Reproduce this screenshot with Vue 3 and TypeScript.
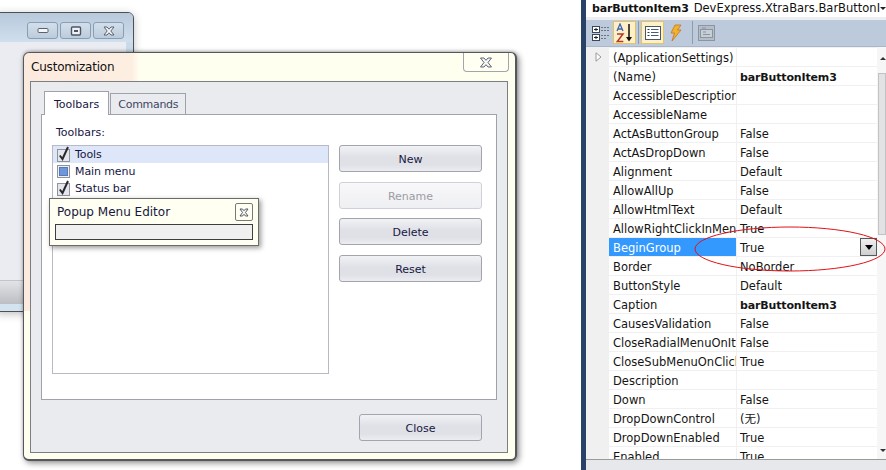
<script setup lang="ts">
interface Row { name: string; value: string; bold?: boolean; selected?: boolean }
const rows: Row[] = [
  { name: '(ApplicationSettings)', value: '' },
  { name: '(Name)', value: 'barButtonItem3', bold: true },
  { name: 'AccessibleDescription', value: '' },
  { name: 'AccessibleName', value: '' },
  { name: 'ActAsButtonGroup', value: 'False' },
  { name: 'ActAsDropDown', value: 'False' },
  { name: 'Alignment', value: 'Default' },
  { name: 'AllowAllUp', value: 'False' },
  { name: 'AllowHtmlText', value: 'Default' },
  { name: 'AllowRightClickInMenu', value: 'True' },
  { name: 'BeginGroup', value: 'True', selected: true },
  { name: 'Border', value: 'NoBorder' },
  { name: 'ButtonStyle', value: 'Default' },
  { name: 'Caption', value: 'barButtonItem3', bold: true },
  { name: 'CausesValidation', value: 'False' },
  { name: 'CloseRadialMenuOnItemClick', value: 'False' },
  { name: 'CloseSubMenuOnClick', value: 'True' },
  { name: 'Description', value: '' },
  { name: 'Down', value: 'False' },
  { name: 'DropDownControl', value: '(无)' },
  { name: 'DropDownEnabled', value: 'True' },
  { name: 'Enabled', value: 'True' },
]
const actions = [
  { label: 'New', disabled: false },
  { label: 'Rename', disabled: true },
  { label: 'Delete', disabled: false },
  { label: 'Reset', disabled: false },
]
</script>

<template>
  <div class="screen">
    <div class="desktop">
      <div class="backwin">
        <div class="back-title">
          <div class="wbtn">
            <svg width="12" height="7" viewBox="0 0 12 7"><rect x="1" y="1.500" width="10" height="4" rx="1" fill="#f4f6f9" stroke="#59626f" /></svg>
          </div>
          <div class="wbtn">
            <svg width="12" height="10" viewBox="0 0 12 10"><rect x="1.500" y="1" width="9" height="8" rx="1" fill="#eef1f5" stroke="#4d5764" stroke-width="1.400" /><rect x="4" y="4" width="4" height="2" fill="#4d5764" /></svg>
          </div>
          <div class="wbtn">
            <svg width="14" height="10" viewBox="0 0 14 10"><path d="M2 1h3l2 2.200L9 1h3L8.800 5 12 9H9L7 6.800 5 9H2l3.200-4z" fill="#f2f4f7" stroke="#5a6370" /></svg>
          </div>
        </div>
        <div class="back-body">
          <div class="back-content"></div>
          <div class="back-band"></div>
        </div>
        <div class="back-foot"></div>
      </div>

      <div class="dialog">
        <div class="dlg-title">
          <span>Customization</span>
          <div class="dlg-close">
            <svg width="14" height="11" viewBox="0 0 14 11"><path d="M1.500 1h3.500l2 2.300L9 1h3.500L9 5.500l3.500 4.500H9L7 7.700 5 10H1.500L5 5.500z" fill="#f6f7f9" stroke="#5c6470" /></svg>
          </div>
        </div>
        <div class="dlg-body">
          <div class="tabs">
            <div class="tab active">Toolbars</div>
            <div class="tab">Commands</div>
          </div>
          <div class="page">
            <div class="lbl">Toolbars:</div>
            <div class="page-main">
              <div class="list">
                <div class="item sel">
                  <svg class="chk" width="15" height="17" viewBox="0 0 15 17"><rect x="1.500" y="4.500" width="12" height="12" fill="#e4e6ec" stroke="#8f939c" /><path d="M3.800 10.500l2.700 3.500L12 2" fill="none" stroke="#2a2a2e" stroke-width="2" /></svg>
                  <span>Tools</span>
                </div>
                <div class="item">
                  <svg class="chk" width="15" height="17" viewBox="0 0 15 17"><rect x="1.500" y="3.500" width="12" height="12" fill="#eef0f5" stroke="#8f939c" /><rect x="3.500" y="5.500" width="8" height="8" fill="#6e96d8" stroke="#5679bb" /></svg>
                  <span>Main menu</span>
                </div>
                <div class="item">
                  <svg class="chk" width="15" height="17" viewBox="0 0 15 17"><rect x="1.500" y="4.500" width="12" height="12" fill="#e4e6ec" stroke="#8f939c" /><path d="M3.800 10.500l2.700 3.500L12 2" fill="none" stroke="#2a2a2e" stroke-width="2" /></svg>
                  <span>Status bar</span>
                </div>
              </div>
              <div class="actions">
                <div v-for="a in actions" :key="a.label" class="btn" :class="{ off: a.disabled }">{{ a.label }}</div>
              </div>
            </div>
          </div>
          <div class="dlg-foot">
            <div class="btn close">Close</div>
          </div>
        </div>
      </div>

      <div class="popup">
        <div class="pop-title">
          <span>Popup Menu Editor</span>
          <div class="pop-close">
            <svg width="10" height="9" viewBox="0 0 10 9"><path d="M1 1h2.500L5 2.700 6.500 1H9L6.500 4.500 9 8H6.500L5 6.300 3.500 8H1l2.500-3.500z" fill="#f4f5f7" stroke="#444b55" stroke-width=".9" /></svg>
          </div>
        </div>
        <div class="pop-bar"></div>
      </div>
    </div>

    <div class="panel">
      <div class="p-title">
        <b>barButtonItem3</b><span class="p-type">DevExpress.XtraBars.BarButtonI</span><i class="p-arrow"></i>
      </div>
      <div class="p-tools">
        <div class="tool plain">
          <svg width="18" height="16" viewBox="0 0 18 16">
            <rect x=".5" y="1.500" width="7" height="6" fill="#fff" stroke="#39475a" /><path d="M2 4.500h4M4 3v3" stroke="#1b2430" />
            <rect x=".5" y="9.500" width="7" height="6" fill="#fff" stroke="#39475a" /><path d="M2 12.500h4M4 11v3" stroke="#1b2430" />
            <path d="M9 2.500h8M9 5.500h8M9 10.500h8M9 13.500h6" stroke="#6d7682" stroke-dasharray="2 1" />
          </svg>
        </div>
        <div class="tool on az">
          <svg width="20" height="20" viewBox="0 0 20 20">
            <path d="M2 8l3-7 3 7M3.200 6h3.600" fill="none" stroke="#3c63b4" stroke-width="1.300" />
            <path d="M2 11h6L2.300 18.500h6" fill="none" stroke="#b03a2a" stroke-width="1.500" />
            <path d="M14 1v15" stroke="#111" stroke-width="1.500" /><path d="M11 14h6l-3 4.500z" fill="#111" />
          </svg>
        </div>
        <i class="tsep"></i>
        <div class="tool on">
          <svg width="16" height="14" viewBox="0 0 16 14"><rect x=".5" y=".5" width="15" height="13" fill="#fff" stroke="#48566a" /><path d="M2.500 3.500h2M2.500 6.500h2M2.500 9.500h2" stroke="#2e3a4b" /><path d="M6 3.500h7.500M6 6.500h7.500M6 9.500h7.500" stroke="#4a5a72" /></svg>
        </div>
        <div class="tool bolt">
          <svg width="13" height="18" viewBox="0 0 13 18"><path d="M6 1h6L8.500 6H12L3 17l2.500-8H2z" fill="#f1b32e" stroke="#c4731c" stroke-width=".8" /></svg>
        </div>
        <i class="tsep sep2"></i>
        <div class="tool pages">
          <svg width="17" height="16" viewBox="0 0 17 16"><rect x=".5" y=".5" width="16" height="15" fill="#b5bec8" stroke="#8b95a1" /><rect x="2.500" y="4.500" width="12" height="8" fill="#c6ced6" stroke="#8b95a1" /><path d="M4 3h4M5 7h3M5 9.500h7" stroke="#8b95a1" /></svg>
        </div>
      </div>
      <div class="grid">
        <div class="rows">
          <div v-for="(r, i) in rows" :key="r.name" class="row">
            <div class="gutter">
              <svg v-if="i === 0" width="7" height="10" viewBox="0 0 7 10"><path d="M1 .8l5 4.200-5 4.200z" fill="#fff" stroke="#9a9a9a" /></svg>
            </div>
            <div class="cname" :class="{ picked: r.selected }">{{ r.name }}</div>
            <div class="cval" :class="{ bold: r.bold }">
              {{ r.value }}
              <div v-if="r.selected" class="drop"><i></i></div>
            </div>
          </div>
        </div>
        <div class="sbar">
          <i class="s-up"></i>
          <div class="thumb"></div>
          <i class="s-down"></i>
        </div>
      </div>
      <div class="p-foot"></div>
      <svg class="ring" width="196" height="50" viewBox="0 0 196 50">
        <ellipse cx="98" cy="24" rx="95" ry="22" fill="none" stroke="#e01218" stroke-width="1" />
      </svg>
    </div>
  </div>
</template>

<style>
html, body { margin: 0; background: #fff; }
</style>

<style scoped>
.screen {
  width: 886px; height: 470px; display: flex; overflow: hidden; background: #fff;
  font-family: "DejaVu Sans", "Noto Sans CJK SC", sans-serif; font-size: 11px;
}
.desktop { position: relative; width: 581px; height: 470px; flex: none; }

.backwin {
  position: absolute; left: -4px; top: 12px; width: 138px; height: 300px; box-sizing: border-box;
  display: flex; flex-direction: column; border: 1px solid #4c5156; border-radius: 0 6px 0 0;
  background: #c9dbea; box-shadow: 0 2px 8px rgba(0,0,0,.25);
}
.back-title {
  height: 29px; flex: none; box-sizing: border-box; padding: 9px 9px 0 0; display: flex; justify-content: flex-end; gap: 2px;
  background: linear-gradient(#b8c9dc, #cfdfed); border-radius: 0 5px 0 0;
}
.wbtn {
  width: 31px; height: 17px; box-sizing: border-box; border: 1px solid #8a9db1; border-radius: 3px;
  background: linear-gradient(#d3dfeb, #bccbdc); display: flex; align-items: center; justify-content: center;
}
.back-body { flex: 1; margin-right: 7px; display: flex; flex-direction: column; }
.back-content { flex: 1; background: #eaecf2; }
.back-band { height: 23px; flex: none; border-top: 1px solid #c2c4c8; background: linear-gradient(#e2e3e6, #bcbec3); }
.back-foot { height: 7px; flex: none; background: #d3e3f0; }

.dialog {
  position: absolute; left: 23px; top: 52px; width: 494px; height: 409px; box-sizing: border-box;
  display: flex; flex-direction: column; padding: 0 7px 6px 6px;
  border: 1px solid #55575a; border-right-width: 2px; border-bottom-width: 2px; border-radius: 6px;
  background: linear-gradient(90deg, #fdeadf 0, #fdeee2 108px, #fffff0 116px) 0 0 / 100% 258px no-repeat, #fffff0;
  box-shadow: 2px 2px 6px rgba(0,0,0,.45), 0 -1px 3px rgba(0,0,0,.2);
}
.dlg-title {
  height: 28px; flex: none; display: flex; justify-content: space-between; align-items: flex-start;
  font-size: 12px; letter-spacing: -.2px; color: #111; line-height: 29px; padding-left: 1px;
}
.dlg-close {
  width: 46px; height: 19px; box-sizing: border-box; border: 1px solid #a2a6ab; border-top: 0; border-radius: 0 0 4px 4px;
  display: flex; align-items: center; justify-content: center; margin-right: -1px; background: #fffff2;
}
.dlg-body {
  flex: 1; display: flex; flex-direction: column; box-sizing: border-box; border: 1px solid #7c7e80;
  background: #e9ebef; padding: 9px 10px 0;
}
.tabs { height: 24px; flex: none; display: flex; align-items: flex-end; padding-left: 3px; margin-bottom: -1px; }
.tab {
  height: 22px; box-sizing: border-box; padding: 0 7px; border: 1px solid #a0a2ab; border-bottom: 0; line-height: 22px;
  background: #e9ebef; color: #3f4763; margin-left: 1px; letter-spacing: -.3px;
}
.tab.active {
  height: 24px; margin-left: 0; padding: 0 9px; background: #fff; color: #17173f; line-height: 25px; position: relative; z-index: 1; letter-spacing: 0;
}
.page { height: 286px; flex: none; box-sizing: border-box; border: 1px solid #a0a2ab; background: #fff; padding: 9px 10px 0; }
.lbl { height: 21px; color: #17173f; line-height: 17px; padding-left: 4px; }
.page-main { display: flex; gap: 10px; align-items: flex-start; }
.list { width: 277px; height: 229px; box-sizing: border-box; border: 1px solid #b7b9c4; flex: none; }
.item { height: 17px; display: flex; align-items: center; gap: 4px; padding-left: 3px; color: #17173f; line-height: 19px; letter-spacing: -.1px; }
.item.sel { background: #dee7fa; }
.chk { flex: none; margin-top: -2px; }
.actions { display: flex; flex-direction: column; gap: 9.500px; width: 143px; flex: none; }
.btn {
  height: 27px; box-sizing: border-box; border: 1px solid #a3a4ae; border-radius: 3px; text-align: center; line-height: 27px;
  background: linear-gradient(#f1f2f5, #dfe1e7 45%, #dfe1e7 75%, #ecedf1); color: #17173f;
}
.btn.off { border-color: #d0d1d6; color: #9b9ba3; background: linear-gradient(#f8f8fa, #eeeff2); }
.dlg-foot { display: flex; justify-content: flex-end; padding: 14px 15px 0 0; }
.btn.close { width: 123px; }

.popup {
  position: absolute; left: 49px; top: 198px; width: 210px; height: 48px; box-sizing: border-box;
  border: 1px solid #6b6c68; background: #fffff2; box-shadow: 2px 2px 5px rgba(0,0,0,.4); padding: 0 5px;
}
.pop-title { height: 25px; display: flex; justify-content: space-between; align-items: flex-start; color: #17173f; font-size: 12px; line-height: 26px; padding-left: 2px; }
.pop-close {
  width: 18px; height: 18px; margin-top: 4px; box-sizing: border-box; border: 1px solid #77797a; border-radius: 2px;
  display: flex; align-items: center; justify-content: center;
}
.pop-bar { height: 16px; box-sizing: border-box; border: 1px solid #3e3e3e; background: #f0f0f0; }

.panel {
  position: relative; width: 305px; height: 470px; flex: none; box-sizing: border-box; border-left: 5px solid #2b4268;
  display: flex; flex-direction: column; background: #fff; font-size: 11.500px;
}
.p-title { height: 20px; flex: none; display: flex; align-items: flex-start; padding-left: 6px; color: #111; line-height: 17px; white-space: nowrap; overflow: hidden; background: linear-gradient(#fff 17px, #eceef1 17px); position: relative; }
.p-title b { font-size: 11px; letter-spacing: -.15px; }
.p-type { margin-left: 5px; }
.p-arrow { position: absolute; right: 0; top: 7px; border: 3px solid transparent; border-top-color: #222; }
.p-tools { height: 27px; flex: none; box-sizing: border-box; background: #bccadb; display: flex; align-items: center; padding: 0 0 1px 6px; border-bottom: 1px solid #a9b7c8; }
.tool { width: 23px; height: 23px; box-sizing: border-box; display: flex; align-items: center; justify-content: center; flex: none; }
.tool.plain { width: 18px; margin-right: 3px; }
.tool.on { border: 1px solid #e5c365; background: #fdf0c8; }
.tsep { width: 1px; height: 23px; background: #8e9bab; margin: 0 2px; flex: none; }
.tool.bolt { width: 17px; margin-left: 3px; }
.tsep.sep2 { margin: 0 5px 0 8px; }
.tool.pages { width: 17px; }

.grid { flex: 1; min-height: 0; display: flex; overflow: hidden; background: #f0f0f0; }
.rows { width: 291px; flex: none; padding-top: 1px; }
.row { height: 19px; display: flex; box-sizing: border-box; color: #151515; line-height: 21px; }
.gutter { width: 23px; flex: none; display: flex; align-items: center; padding-left: 9px; box-sizing: border-box; height: 18px; }
.cname {
  width: 127px; flex: none; box-sizing: border-box; padding-left: 4px; height: 18px; background: #fff; white-space: nowrap; overflow: hidden;
}
.cname.picked { background: #3399ff; color: #fff; }
.cval { position: relative; flex: 1; margin-left: 1px; box-sizing: border-box; height: 18px; background: #fff; padding-left: 3px; white-space: nowrap; overflow: hidden; }
.cval.bold { font-weight: 700; font-size: 11px; letter-spacing: -.15px; }
.drop {
  position: absolute; right: 0; top: 0; width: 17px; height: 18px; box-sizing: border-box; border: 1px solid #55585c;
  background: linear-gradient(#f0f0f0, #cfcfcf); display: flex; align-items: center; justify-content: center;
}
.drop i { border: 4px solid transparent; border-top: 5px solid #000; border-bottom: 0; }
.sbar { flex: 1; background: #f6f6f6; position: relative; padding-top: 26px; box-sizing: border-box; }
.thumb { height: 162px; margin-left: 1px; background: #e2e2e4; border: 1px solid #c2c2c4; box-sizing: border-box; }
.s-up { position: absolute; top: 7px; left: 3px; border: 3px solid transparent; border-bottom: 3px solid #333; }
.s-down { position: absolute; bottom: 4px; left: 3px; border: 3px solid transparent; border-top: 3px solid #333; }
.p-foot { height: 11px; flex: none; border-top: 1px solid #9a9a9a; background: #e6e8ec; box-sizing: border-box; }
.ring { position: absolute; left: 106px; top: 225px; pointer-events: none; }
</style>
